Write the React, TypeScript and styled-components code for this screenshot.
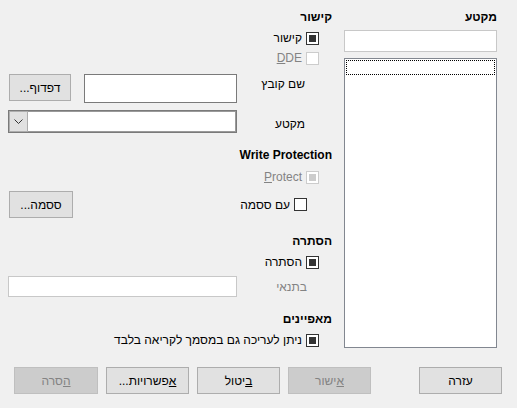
import styled, { createGlobalStyle } from "styled-components";

const GlobalStyle = createGlobalStyle`
  html, body {
    margin: 0;
    padding: 0;
    background: #f0f0f0;
  }
  body {
    font-family: "Liberation Sans", "DejaVu Sans", sans-serif;
    font-size: 12px;
    color: #000;
  }
`;

const App = () => {
    return (
        <Dialog dir="rtl">
            <GlobalStyle />
            <Top>
                <SectionColumn>
                    <Heading>מקטע</Heading>
                    <NameInput />
                    <SectionList>
                        <FocusRow />
                    </SectionList>
                </SectionColumn>

                <Main>
                    <Heading $top={9}>קישור</Heading>
                    <CheckRow $top={5} $indent={13}>
                        <CheckBox $checked />
                        <span>קישור</span>
                    </CheckRow>
                    <CheckRow $top={4} $indent={13} $disabled>
                        <CheckBox $disabled />
                        <span dir="ltr"><u>D</u>DE</span>
                    </CheckRow>

                    <FieldRow $top={8} $height={29} $align="flex-start">
                        <FieldLabel $indent={27} $pad={1}>שם קובץ</FieldLabel>
                        <Controls>
                            <TextBox $width={153} $dark />
                            <Button $width={62}>דפדוף...</Button>
                        </Controls>
                    </FieldRow>

                    <FieldRow $top={7} $height={23}>
                        <FieldLabel $indent={27} $pad={4}>מקטע</FieldLabel>
                        <Combo>
                            <ComboField />
                            <ComboButton>
                                <svg width="9" height="6" viewBox="0 0 9 6">
                                    <path d="M0.5 0.5 L4.5 4.5 L8.5 0.5" fill="none" stroke="#333" strokeWidth="1" />
                                </svg>
                            </ComboButton>
                        </Combo>
                    </FieldRow>

                    <Heading $top={14} dir="ltr">Write Protection</Heading>
                    <CheckRow $top={6} $indent={13} $disabled>
                        <CheckBox $checked $disabled />
                        <span dir="ltr"><u>P</u>rotect</span>
                    </CheckRow>
                    <FieldRow $top={6} $height={27}>
                        <CheckRow $indent={25}>
                            <CheckBox />
                            <span>עם ססמה</span>
                        </CheckRow>
                        <Controls>
                            <span />
                            <Button $width={64}>ססמה...</Button>
                        </Controls>
                    </FieldRow>

                    <Heading $top={15}>הסתרה</Heading>
                    <CheckRow $top={5} $indent={13}>
                        <CheckBox $checked />
                        <span>הסתרה</span>
                    </CheckRow>
                    <FieldRow $top={6} $height={21}>
                        <FieldLabel $indent={25} $pad={0} $disabled>בתנאי</FieldLabel>
                        <TextBox $width={229} />
                    </FieldRow>

                    <Heading $top={14}>מאפיינים</Heading>
                    <CheckRow $top={5} $indent={13}>
                        <CheckBox $checked />
                        <span>ניתן לעריכה גם במסמך לקריאה בלבד</span>
                    </CheckRow>
                </Main>
            </Top>

            <ButtonBar>
                <Button $width={83}>עזרה</Button>
                <ButtonGroup>
                    <Button $width={83} disabled><u>א</u>ישור</Button>
                    <Button $width={83}><u>ב</u>יטול</Button>
                    <Button $width={83}><u>א</u>פשרויות...</Button>
                    <Button $width={84} disabled><u>ה</u>סרה</Button>
                </ButtonGroup>
            </ButtonBar>
        </Dialog>
    );
};

export default App;

// סגנונות
const Dialog = styled.div`
  width: 517px;
  height: 408px;
  box-sizing: border-box;
  background: #f0f0f0;
  padding: 0 20px 0 8px;
  display: flex;
  flex-direction: column;
  overflow: hidden;
`;

const Top = styled.div`
  display: flex;
  gap: 12px;
  height: 348px;
`;

const SectionColumn = styled.div`
  width: 153px;
  display: flex;
  flex-direction: column;
  padding-top: 9px;
`;

const Main = styled.div`
  width: 324px;
  display: flex;
  flex-direction: column;
`;

const Heading = styled.div<{ $top?: number }>`
  margin-top: ${(p) => p.$top ?? 0}px;
  height: 16px;
  line-height: 16px;
  font-weight: bold;
  text-align: right;
`;

const NameInput = styled.div`
  margin-top: 5px;
  height: 22px;
  box-sizing: border-box;
  background: #fff;
  border: 1px solid #c8c8c8;
`;

const SectionList = styled.div`
  margin-top: 6px;
  flex: 1;
  background: #fff;
  border: 1px solid #828790;
  padding: 1px;
`;

const FocusRow = styled.div`
  height: 15px;
  box-sizing: border-box;
  border: 1px dotted #000;
`;

const CheckRow = styled.div<{ $top?: number; $indent: number; $disabled?: boolean }>`
  margin-top: ${(p) => p.$top ?? 0}px;
  height: 16px;
  display: flex;
  align-items: center;
  gap: 4px;
  padding-right: ${(p) => p.$indent}px;
  color: ${(p) => (p.$disabled ? "#838383" : "#000")};
  white-space: nowrap;
`;

const CheckBox = styled.span<{ $checked?: boolean; $disabled?: boolean }>`
  width: 13px;
  height: 13px;
  box-sizing: border-box;
  flex: none;
  background: #fff;
  border: 1px solid ${(p) => (p.$disabled ? "#cccccc" : "#333333")};
  display: flex;
  align-items: center;
  justify-content: center;

  &::after {
    content: "";
    display: ${(p) => (p.$checked ? "block" : "none")};
    width: 7px;
    height: 7px;
    background: ${(p) => (p.$disabled ? "#cccccc" : "#333333")};
  }
`;

const FieldRow = styled.div<{ $top: number; $height: number; $align?: string }>`
  margin-top: ${(p) => p.$top}px;
  height: ${(p) => p.$height}px;
  display: flex;
  align-items: ${(p) => p.$align ?? "center"};
`;

const FieldLabel = styled.div<{ $indent: number; $pad: number; $disabled?: boolean }>`
  width: 95px;
  box-sizing: border-box;
  padding-right: ${(p) => p.$indent}px;
  padding-top: ${(p) => p.$pad}px;
  line-height: 18px;
  color: ${(p) => (p.$disabled ? "#838383" : "#000")};
  white-space: nowrap;
`;

const Controls = styled.div`
  flex: 1;
  height: 100%;
  display: flex;
  align-items: stretch;
  justify-content: space-between;
  padding-left: 1px;
`;

const TextBox = styled.div<{ $width: number; $dark?: boolean }>`
  width: ${(p) => p.$width}px;
  box-sizing: border-box;
  align-self: stretch;
  background: #fff;
  border: 1px solid ${(p) => (p.$dark ? "#7a7a7a" : "#c8c8c8")};
`;

const Combo = styled.div`
  width: 229px;
  height: 23px;
  box-sizing: border-box;
  display: flex;
  background: #fff;
  border: 1px solid #7a7a7a;
  box-shadow: inset 0 0 0 1px #9a9a9a;
`;

const ComboField = styled.div`
  flex: 1;
`;

const ComboButton = styled.div`
  width: 17px;
  background: #e1e1e1;
  border: 1px solid #adadad;
  display: flex;
  align-items: center;
  justify-content: center;
`;

const Button = styled.button<{ $width: number }>`
  width: ${(p) => p.$width}px;
  height: 27px;
  box-sizing: border-box;
  padding: 0;
  font-family: inherit;
  font-size: 12px;
  color: #000;
  background: #e1e1e1;
  border: 1px solid #adadad;
  border-radius: 0;

  &:disabled {
    color: #838383;
    background: #cccccc;
    border-color: #bfbfbf;
  }
`;

const ButtonBar = styled.div`
  margin-top: 19px;
  display: flex;
  justify-content: space-between;
  padding: 0 0 0 6px;
  margin-right: -5px;
`;

const ButtonGroup = styled.div`
  display: flex;
  gap: 8px;
`;
